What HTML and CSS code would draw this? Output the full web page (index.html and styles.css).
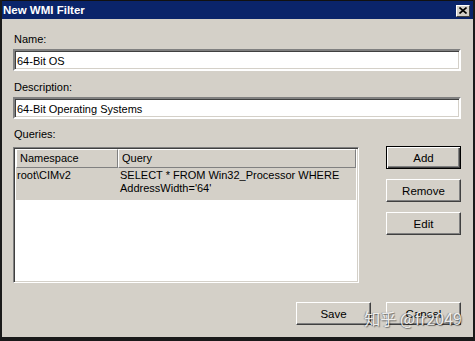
FILE: index.html
```html
<!DOCTYPE html>
<html lang="en">
<head>
    <meta charset="UTF-8">
    <title>New WMI Filter</title>
    <link rel="stylesheet" href="styles.css">
</head>
<body>
    <div class="dialog">
        <!-- title bar -->
        <div class="titlebar">
            <span class="title">New WMI Filter</span>
            <span class="close-btn">
                <svg width="8" height="7" viewBox="0 0 8 7">
                    <path d="M0.5 0.5 L7.5 6.5 M7.5 0.5 L0.5 6.5" stroke="#000" stroke-width="1.6" fill="none"/>
                </svg>
            </span>
        </div>

        <div class="content">
            <div class="label label-first">Name:</div>
            <div class="field">64-Bit OS</div>

            <div class="label">Description:</div>
            <div class="field">64-Bit Operating Systems</div>

            <div class="label label-queries">Queries:</div>
            <div class="queries-row">
                <div class="list">
                    <div class="list-header">
                        <div class="col col-ns">Namespace</div>
                        <div class="col col-query">Query</div>
                    </div>
                    <div class="list-row">
                        <div class="cell cell-ns">root\CIMv2</div>
                        <div class="cell cell-query">SELECT * FROM Win32_Processor WHERE<br>AddressWidth='64'</div>
                    </div>
                </div>
                <div class="side-buttons">
                    <div class="btn btn-default">Add</div>
                    <div class="btn">Remove</div>
                    <div class="btn">Edit</div>
                </div>
            </div>

            <div class="footer">
                <div class="btn">Save</div>
                <div class="btn">Cancel</div>
            </div>
        </div>

        <div class="watermark">知乎 @fr2049</div>
    </div>
</body>
</html>
```

FILE: styles.css
```css
:root {
    --face: #d4d0c8;
    --shadow: #808080;
    --dark: #404040;
    --title: #0a246a;
}

body {
    margin: 0;
    background: #000;
    font-family: 'Liberation Sans', Arial, sans-serif;
    font-size: 11px;
    color: #000;
}

.dialog {
    position: relative;
    width: 475px;
    height: 341px;
    box-sizing: border-box;
    background: var(--face);
    border-left: 2px solid #1a1a1a;
    border-right: 2px solid #1a1a1a;
    border-bottom: 4px solid #1a1a1a;
    display: flex;
    flex-direction: column;
}

/* title bar */
.titlebar {
    height: 19px;
    box-sizing: border-box;
    border-top: 1px solid #111;
    background: var(--title);
    display: flex;
    align-items: center;
    justify-content: space-between;
    padding: 0 3px 0 1px;
}

.title {
    color: #fff;
    font-weight: bold;
    font-size: 11.5px;
}

.close-btn {
    width: 14px;
    height: 12px;
    box-sizing: border-box;
    background: var(--face);
    border: 1px solid;
    border-color: #fff var(--dark) var(--dark) #fff;
    display: flex;
    align-items: center;
    justify-content: center;
    margin-top: 1px;
}

/* body */
.content {
    flex: 1;
    display: flex;
    flex-direction: column;
    padding: 0 12px 0 11px;
}

.label {
    line-height: 13px;
    margin-top: 10px;
    margin-bottom: 3px;
    padding-left: 1px;
}

.label-first {
    margin-top: 14px;
}

.label-queries {
    margin-top: 9px;
    margin-bottom: 5px;
}

.field {
    height: 22px;
    box-sizing: border-box;
    background: #fff;
    border: 2px solid;
    border-color: var(--shadow) #fff #fff var(--shadow);
    box-shadow: inset 1px 1px var(--dark), inset -1px -1px var(--face);
    padding: 3px 2px 0;
    line-height: 14px;
}

/* queries list */
.queries-row {
    display: flex;
    gap: 27px;
    align-items: flex-start;
}

.list {
    width: 346px;
    height: 136px;
    margin-top: 1px;
    box-sizing: border-box;
    background: #fff;
    border: 1px solid;
    border-color: var(--shadow) #fff #fff var(--shadow);
    box-shadow: inset 1px 1px var(--dark), inset -1px -1px var(--face);
    padding: 1px 2px 2px 1px;
}

.list-header {
    display: flex;
    height: 19px;
    margin-left: 1px;
}

.col {
    box-sizing: border-box;
    background: var(--face);
    border: 1px solid;
    border-color: #fff var(--shadow) var(--shadow) #fff;
    line-height: 16px;
    padding-left: 3px;
}

.col-ns {
    width: 102px;
}

.col-query {
    flex: 1;
    padding-left: 3px;
}

.list-row {
    display: flex;
    height: 32px;
    margin-left: 1px;
    background: var(--face);
    line-height: 13px;
}

.cell {
    padding-top: 1px;
}

.cell-ns {
    width: 102px;
    padding-left: 1px;
    box-sizing: border-box;
}

.cell-query {
    flex: 1;
    padding-left: 2px;
}

/* buttons */
.side-buttons {
    display: flex;
    flex-direction: column;
    gap: 10px;
}

.btn {
    width: 75px;
    height: 23px;
    box-sizing: border-box;
    background: var(--face);
    border: 1px solid;
    border-color: #fff var(--dark) var(--dark) #fff;
    box-shadow: inset -1px -1px var(--shadow);
    display: flex;
    align-items: center;
    justify-content: center;
    font-size: 11.5px;
}

.btn-default {
    border: 1px solid #000;
    box-shadow: inset 1px 1px #fff, inset -1px -1px var(--dark), inset -2px -2px var(--shadow);
}

.footer {
    display: flex;
    justify-content: flex-end;
    gap: 15px;
    margin-top: 19px;
}

/* watermark over the cancel button */
.watermark {
    position: absolute;
    right: 11px;
    bottom: 9px;
    font-family: 'Noto Sans CJK SC', 'Liberation Sans', sans-serif;
    font-size: 16px;
    line-height: 20px;
    color: rgba(255, 255, 255, 0.85);
    text-shadow: 1px 1px 1px rgba(0, 0, 0, 0.45), -1px 0 1px rgba(0, 0, 0, 0.3);
}
```
